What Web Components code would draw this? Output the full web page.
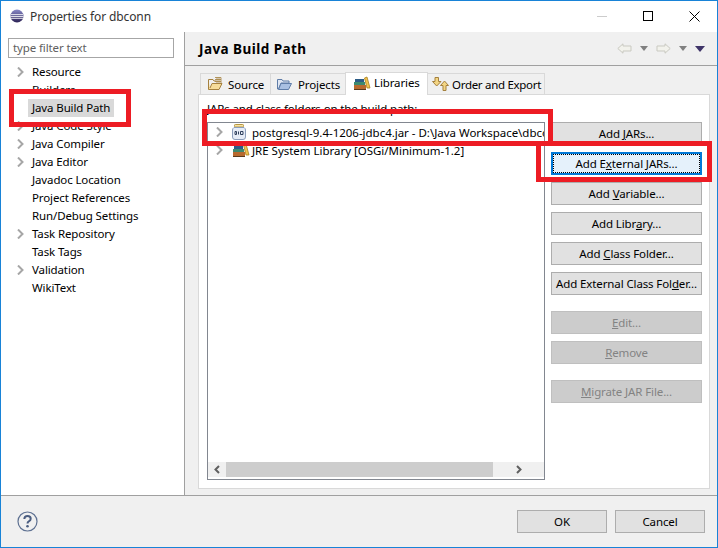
<!DOCTYPE html>
<html><head><meta charset="utf-8"><title>Properties for dbconn</title>
<style>
html,body{margin:0;padding:0;background:#fff}
body{font:11.5px "Noto Sans","Open Sans",sans-serif;letter-spacing:-.12px;color:#000;width:718px;height:548px;overflow:hidden}
u{text-underline-offset:1px}
</style></head><body>
<x-dialog>
  <x-titlebar slot="title">Properties for dbconn</x-titlebar>
  <x-tree slot="nav">
    <x-node exp>Resource</x-node><x-node>Builders</x-node><x-node sel>Java Build Path</x-node>
    <x-node exp>Java Code Style</x-node><x-node exp>Java Compiler</x-node><x-node exp>Java Editor</x-node>
    <x-node>Javadoc Location</x-node><x-node>Project References</x-node><x-node>Run/Debug Settings</x-node>
    <x-node exp>Task Repository</x-node><x-node>Task Tags</x-node><x-node exp>Validation</x-node><x-node>WikiText</x-node>
  </x-tree>
  <x-pagehead slot="head">Java Build Path</x-pagehead>
  <x-tabs slot="tabs">
    <x-tab icon="folder" w="71" pad="6" gap="5">Source</x-tab>
    <x-tab icon="projects" w="76" pad="5" gap="6">Projects</x-tab>
    <x-tab icon="books" w="83" pad="7" gap="3" active>Libraries</x-tab>
    <x-tab icon="order" w="118" pad="3" gap="3" style="letter-spacing:-.3px">Order and Export</x-tab>
  </x-tabs>
  <x-build slot="body">
    <x-entry icon="jar">postgresql-9.4-1206-jdbc4.jar - D:\Java Workspace\dbconn\lib</x-entry>
    <x-entry icon="books">JRE System Library [OSGi/Minimum-1.2]</x-entry>
    <x-btn slot="btn">Add <u>J</u>ARs...</x-btn>
    <x-btn slot="btn" focus>Add E<u>x</u>ternal JARs...</x-btn>
    <x-btn slot="btn">Add <u>V</u>ariable...</x-btn>
    <x-btn slot="btn">Add Libr<u>a</u>ry...</x-btn>
    <x-btn slot="btn">Add <u>C</u>lass Folder...</x-btn>
    <x-btn slot="btn">Add External Class Fol<u>d</u>er...</x-btn>
    <x-btn slot="btn" off style="margin-top:9px"><u>E</u>dit...</x-btn>
    <x-btn slot="btn" off><u>R</u>emove</x-btn>
    <x-btn slot="btn" off style="margin-top:9px"><u>M</u>igrate JAR File...</x-btn>
  </x-build>
  <x-btn slot="ok" wide>OK</x-btn>
  <x-btn slot="cancel" wide>Cancel</x-btn>
</x-dialog>
<script>
const ICONS={
folder:`<svg width="16" height="16" viewBox="0 0 16 16"><path d="M1.5 5V13.5H12L15 7.5H5L3 12" fill="#f6dc9a" stroke="#a5813f"/><path d="M1.5 5V3.5H6L7 5H9" fill="none" stroke="#a5813f"/><path d="M8 1.5H14V7M10 1.5V7M12 1.5V7M8 3.5H14M8 5.5H14" fill="none" stroke="#a5813f" stroke-width=".8"/></svg>`,
projects:`<svg width="16" height="16" viewBox="0 0 16 16"><path d="M1.5 3.5H6L7 5H13V7H5L2.5 13H1.5Z" fill="#dfe6f2" stroke="#5f7da8"/><path d="M2.5 13.5L5 7.5H15.5L12.5 13.5Z" fill="#a9c0e2" stroke="#5f7da8"/></svg>`,
books:`<svg width="18" height="16" viewBox="0 0 18 16"><path d="M11.5 3L14 2L17 13H14Z" fill="#f2c34e" stroke="#a77f1d" stroke-width=".8"/><rect x="1" y="10" width="12" height="4" fill="#b86a2e"/><rect x="1" y="7" width="11" height="3" fill="#3d8a70"/><rect x="2" y="4" width="9" height="3" fill="#2c5c86"/><path d="M1 14.5H13" stroke="#5b3a1c"/></svg>`,
order:`<svg width="18" height="16" viewBox="0 0 18 16"><path d="M4 1.5H7.5V5.5H10L5.7 10L1.5 5.5H4Z" fill="#f4d684" stroke="#a5813f"/><path d="M12 14.5V9.5H9.5L13.5 5L17.500 9.500H15V14.500Z" fill="#f4d684" stroke="#a5813f"/></svg>`,
jar:`<svg width="14" height="16" viewBox="0 0 14 16"><rect x="2.500" y=".5" width="9" height="2.500" rx=".8" fill="#f6e3a8" stroke="#b8963f"/><path d="M2 3.500H12Q13.500 4.500 13.500 6V13Q13.500 15.500 11 15.500H3Q.5 15.500 .5 13V6Q.5 4.500 2 3.500Z" fill="#e6ecf7" stroke="#8b9dbb"/><path d="M3 7.500H4.500V10.500H3ZM8.500 7.500H11V10.500H8.500Z" fill="none" stroke="#31415e"/><path d="M6.500 7.500V10.500" stroke="#31415e"/></svg>`};
function def(name,css,html){customElements.define(name,class extends HTMLElement{connectedCallback(){if(this.shadowRoot)return;const s=this.attachShadow({mode:'open'});s.innerHTML=`<style>${css}</style>${typeof html==='function'?html(this):html}`;}});}
const CHEV=`<svg width="7" height="10" viewBox="0 0 7 10"><path d="M1 .5L5.500 5L1 9.500" fill="none" stroke="#a6a6a6" stroke-width="2"/></svg>`;

def('x-dialog',`
:host{display:flex;flex-direction:column;position:relative;width:716px;height:546px;border:1px solid #1883d7;background:#fff}
.main{display:flex;height:463px;flex:none;border-bottom:1px solid #a0a0a0}
.nav{width:183px;flex:none;border-right:1px solid #a0a0a0;display:flex;flex-direction:column}
.filter{margin:6px 10px 0 7px;height:20px;border:1px solid #a6a6a6;box-sizing:border-box;color:#606060;padding-left:4px;line-height:18px}
.right{flex:1;min-width:0;background:#f0f0f0;display:flex;flex-direction:column}
.panel{margin:0 7px 6px 13px;flex:1;display:flex;flex-direction:column;min-height:0}
.foot{flex:1;background:#f0f0f0;display:flex;align-items:center;padding:0 12px 0 16px}
.sp{flex:1}
.foot ::slotted([slot=cancel]){margin-left:8px}
.mark{position:absolute;border:5px solid #ed1c24;box-sizing:border-box;pointer-events:none}
`,`<slot name="title"></slot>
<div class="main"><div class="nav"><div class="filter">type filter text</div><slot name="nav"></slot></div>
<div class="right"><slot name="head"></slot><div class="panel"><slot name="tabs"></slot><slot name="body"></slot></div></div></div>
<div class="foot"><svg width="21" height="21" viewBox="0 0 21 21"><circle cx="10.500" cy="10.500" r="9.500" fill="none" stroke="#5e7192" stroke-width="1.200"/><path d="M7.300 8Q7.500 5 10.500 5Q13.700 5 13.700 7.700Q13.700 9.300 11.800 10.300Q10.500 11 10.500 12.500" fill="none" stroke="#4a5d80" stroke-width="2"/><circle cx="10.500" cy="15.300" r="1.300" fill="#4a5d80"/></svg><div class="sp"></div><slot name="ok"></slot><slot name="cancel"></slot></div>
<div class="mark" style="left:8px;top:88px;width:122px;height:38px"></div>
<div class="mark" style="left:201px;top:108px;width:351px;height:37px"></div>
<div class="mark" style="left:535px;top:140px;width:176px;height:41px"></div>`);

def('x-titlebar',`
:host{display:flex;align-items:center;height:31px;flex:none;color:#333;font-size:12px}
svg{flex:none}.ic{margin:-1px 6px 0 9px}.t{flex:1;position:relative}
.w{width:45px;height:30px;display:flex;align-items:center;justify-content:center;box-sizing:border-box;margin-top:-1px}.w:nth-last-child(2){padding-left:1px}.w:last-child{width:47px;padding-left:2px}
`,`<svg class="ic" width="14" height="14" viewBox="0 0 15 15"><defs><linearGradient id="g" x1="0" y1="0" x2="0" y2="1"><stop offset="0" stop-color="#8a8ac8"/><stop offset="1" stop-color="#2c2255"/></linearGradient></defs><circle cx="7.500" cy="7.500" r="7" fill="url(#g)"/><path d="M1 6H14M.5 8H14.500M1 10H14" stroke="#fff" stroke-width=".9"/></svg><span class="t"><slot></slot></span>
<div class="w"><svg width="11" height="11"><path d="M0 5.500H10" stroke="#ccc"/></svg></div>
<div class="w"><svg width="11" height="11"><rect x=".5" y=".5" width="9" height="9" fill="none" stroke="#000"/></svg></div>
<div class="w"><svg width="11" height="11"><path d="M.5 .5L10.500 10.500M10.500 .5L.5 10.500" stroke="#000"/></svg></div>`);

def('x-tree',`:host{display:flex;flex-direction:column;padding-top:5px}`,`<slot></slot>`);
def('x-node',`
:host{display:flex;align-items:center;height:18px;padding-left:16px}
.c{width:12px;display:flex;flex:none;margin-right:3px}
.l{padding:0 4px;line-height:18px;height:18px;margin-left:-4px}
:host([sel]) .l{background:#d9d9d9}
`,h=>`<span class="c">${h.hasAttribute('exp')?CHEV:''}</span><span class="l"><slot></slot></span>`);

def('x-pagehead',`
:host{display:block;height:34px;flex:none;box-sizing:border-box;border-bottom:1px solid #a0a0a0;padding-left:14px;line-height:34px;font-weight:700;font-size:13.500px;position:relative;letter-spacing:.45px}
.n{position:absolute;right:12px;top:11px;display:flex;align-items:center;gap:4px}
`,`<slot></slot><div class="n">
<svg width="15" height="11" viewBox="0 0 15 11"><path d="M.8 5.500L6 .8V3H14V8H6V10.200Z" fill="#f2f2ec" stroke="#c9c9c1"/></svg>
<svg width="8" height="5" style="margin:0 4px"><path d="M0 0H8L4 5Z" fill="#808080"/></svg>
<svg width="15" height="11" viewBox="0 0 15 11"><path d="M14.200 5.500L9 .8V3H1V8H9V10.200Z" fill="#f2f2ec" stroke="#c9c9c1"/></svg>
<svg width="8" height="5" style="margin:0 4px"><path d="M0 0H8L4 5Z" fill="#808080"/></svg>
<svg width="10" height="6"><path d="M0 0H10L5 6Z" fill="#3f3468"/></svg></div>`);

def('x-tabs',`:host{display:flex;height:29px;flex:none;align-items:flex-end;padding-left:2px;margin-bottom:-1px;position:relative;z-index:1}`,`<slot></slot>`);
def('x-tab',`
:host{display:flex;align-items:center;box-sizing:border-box;height:21px;background:#f0f0f0;border:1px solid #d9d9d9;border-bottom:none;margin-right:-1px;white-space:nowrap;margin-bottom:1px}
:host([active]){height:23px;background:#fff;margin-bottom:0;padding-bottom:3px;z-index:2}
svg{flex:none}
`,h=>{h.style.width=h.getAttribute('w')+'px';h.style.paddingLeft=h.getAttribute('pad')+'px';h.style.gap=h.getAttribute('gap')+'px';return `${ICONS[h.getAttribute('icon')]}<span><slot></slot></span>`});

def('x-build',`
:host{display:block;position:relative;flex:1;background:#fff;border:1px solid #d9d9d9;box-sizing:border-box;padding:4px 7px 7px 8px}
.lab{height:23px;line-height:19px}
.row{display:flex;gap:6px;height:358px}
.list{width:338px;flex:none;box-sizing:border-box;border:1px solid #828790;display:flex;flex-direction:column}
.items{flex:1;overflow:hidden;min-width:0}
.sb{height:15px;margin:0 0 2px;background:#f0f0f0;display:flex;align-items:center;flex:none}
.thumb{height:15px;background:#cdcdcd;width:267px}
.a{width:18px;display:flex;justify-content:center}.b{flex:1;display:flex;justify-content:center}
.btns{display:flex;flex-direction:column;gap:7px;width:151px}
`,`<div class="lab">JARs and class folders on the build path:</div><div class="row"><div class="list"><div class="items"><slot></slot></div>
<div class="sb"><div class="a"><svg width="6" height="9"><path d="M5 1L1.500 4.500L5 8" fill="none" stroke="#606060" stroke-width="2"/></svg></div><div class="thumb"></div><div class="b"><svg width="6" height="9"><path d="M1 1L4.500 4.500L1 8" fill="none" stroke="#606060" stroke-width="2"/></svg></div></div></div>
<div class="btns"><slot name="btn"></slot></div></div>`);
def('x-entry',`
:host{display:flex;align-items:center;height:18px;padding-left:8px;white-space:nowrap;overflow:hidden;letter-spacing:-.02px}
.c{width:7px;flex:none;display:flex;margin-right:9px}.i{width:20px;flex:none;display:flex;justify-content:flex-start}
`,h=>`<span class="c">${CHEV}</span><span class="i">${ICONS[h.getAttribute('icon')]}</span><span><slot></slot></span>`);
def('x-btn',`
:host{display:flex;align-items:center;justify-content:center;box-sizing:border-box;height:23px;border:1px solid #adadad;background:#e1e1e1;white-space:nowrap;position:relative;flex:none}
:host([off]){background:#cccccc;border-color:#bfbfbf;color:#838383}
:host([wide]){width:90px;height:23px}
:host([focus]){background:#e5f1fb;border:2px solid #0078d7}
.f{display:none;position:absolute;inset:0;border:1px dotted #000}
:host([focus]) .f{display:block}
`,`<span><slot></slot></span><div class="f"></div>`);
</script>
</body></html>
